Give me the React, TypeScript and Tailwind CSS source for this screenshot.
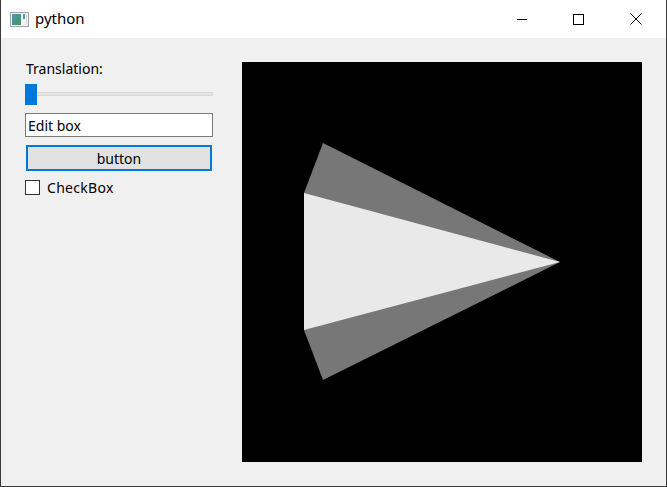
import React from "react";

export default function App() {
  return (
    <div
      className="w-[667px] h-[487px] bg-[#f0f0f0] border-x border-b border-[#3a3a3a] flex flex-col overflow-hidden"
      style={{ fontFamily: '"Noto Sans", "Open Sans", sans-serif' }}
    >
      {/* Title bar */}
      <div className="h-[38px] bg-white flex items-center shrink-0">
        <svg className="ml-[9px]" width="19" height="15" viewBox="0 0 19 15">
          <defs>
            <linearGradient id="ic" x1="0" y1="0" x2="1" y2="1">
              <stop offset="0" stopColor="#5b8fb8" />
              <stop offset="1" stopColor="#3f9a5f" />
            </linearGradient>
          </defs>
          <rect x="0.5" y="0.5" width="18" height="14" fill="#f4f4f4" stroke="#9aa3a8" />
          <rect x="2" y="2" width="9" height="11" fill="url(#ic)" />
          <rect x="13" y="2" width="2" height="5" fill="#4aa0a0" />
          <rect x="16" y="2" width="1" height="11" fill="#d0d8dc" />
        </svg>
        <span className="ml-[6px] text-[15px] text-black leading-none mb-[1px]">python</span>
        <div className="ml-auto flex h-full">
          <div className="w-[56px] h-full flex items-center justify-center">
            <div className="w-[10px] h-px bg-black" />
          </div>
          <div className="w-[56px] h-full flex items-center justify-center">
            <div className="w-[11px] h-[11px] border border-black" />
          </div>
          <div className="w-[60px] h-full flex items-center justify-center">
            <svg width="12" height="12" viewBox="0 0 12 12">
              <path d="M0.5 0.5 L11.5 11.5 M11.5 0.5 L0.5 11.5" stroke="#000" strokeWidth="1" />
            </svg>
          </div>
        </div>
      </div>

      {/* Body */}
      <div className="flex flex-1">
        {/* Left panel */}
        <div className="w-[241px] pl-[24px] pt-[22px] flex flex-col">
          <div className="text-[14px] text-black leading-[18px] ml-[1px]">Translation:</div>
          <div className="relative mt-[6px] h-[21px] w-[188px] flex items-center">
            <div className="absolute left-[11px] right-0 top-[8px] h-[4px] bg-[#e7e7e7] border border-[#d6d6d6]" />
            <div className="absolute left-0 top-0 w-[12px] h-[21px] bg-[#0078d7]" />
          </div>
          <div className="mt-[8px] w-[188px] h-[24px] bg-white border border-[#7a7a7a] flex items-center pl-[2px] text-[14px] text-black">
            Edit box
          </div>
          <div className="mt-[8px] ml-[1px] w-[186px] h-[26px] bg-[#e1e1e1] border-2 border-[#0078d7] flex items-center justify-center text-[14px] text-black">
            button
          </div>
          <div className="mt-[9px] flex items-center">
            <div className="w-[15px] h-[15px] bg-white border border-[#333]" />
            <span className="ml-[7px] text-[14px] text-black leading-none tracking-[0.3px]">CheckBox</span>
          </div>
        </div>

        {/* Canvas */}
        <div className="pt-[24px]">
          <svg width="400" height="400" viewBox="0 0 400 400" className="block">
            <rect width="400" height="400" fill="#000" />
            <polygon points="81,81 318,200 81,318 62,268 62,131" fill="#777777" />
            <polygon points="62,131 318,200 62,268" fill="#e9e9e9" />
          </svg>
        </div>
      </div>
    </div>
  );
}
